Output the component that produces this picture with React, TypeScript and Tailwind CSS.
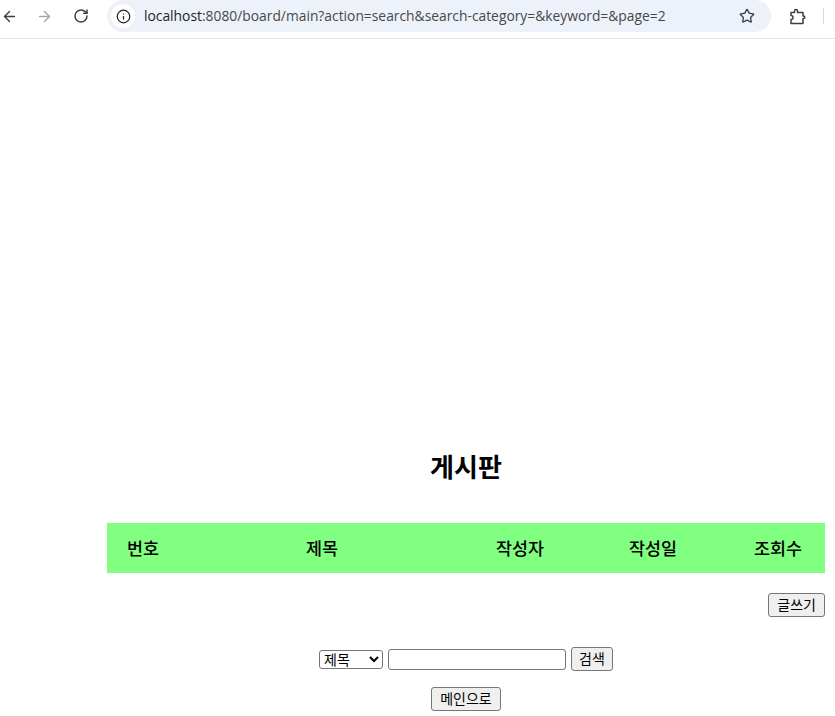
import React from 'react';
import { ArrowLeft, ArrowRight, RotateCw, Info, Star } from 'lucide-react';

const KR = "font-['Liberation_Sans','Noto_Sans_CJK_KR',sans-serif]";
const btn = "h-6 rounded-[3px] border border-[#767676] bg-[#efefef] px-2 text-[14px] font-normal leading-none text-black";

export default function App() {
  const columns = [
    { label: '번호', width: 'w-[72px]' },
    { label: '제목', width: 'w-[286px]' },
    { label: '작성자', width: 'w-[110px]' },
    { label: '작성일', width: 'w-[156px]' },
    { label: '조회수', width: 'w-[94px]' },
  ];

  return (
    <div className={`h-[716px] w-[835px] overflow-hidden bg-white text-black ${KR}`}>
      {/* browser toolbar */}
      <div className="flex h-[39px] items-start border-b border-[#e3e3e3]">
        <div className="flex h-8 w-[107px] items-center text-[#3c3f43]">
          <ArrowLeft size={17} strokeWidth={2} className="ml-[1px]" />
          <ArrowRight size={17} strokeWidth={2} className="ml-[18px] text-[#a5a7a9]" />
          <RotateCw size={16} strokeWidth={2.2} className="ml-[20px]" />
        </div>
        <div className="flex h-8 w-[664px] items-center rounded-full bg-[#edf2fa]">
          <div className="ml-1 flex h-6 w-6 items-center justify-center rounded-full bg-white">
            <Info size={15} strokeWidth={2} className="text-[#202124]" />
          </div>
          <div className="ml-[9px] font-['Open_Sans','Liberation_Sans',sans-serif] text-[13.84px] whitespace-nowrap text-[#474747]">
            <span className="text-[#1f1f1f]">localhost</span>:8080/board/main?action=search&amp;search-category=&amp;keyword=&amp;page=2
          </div>
          <Star size={16} strokeWidth={2} className="ml-auto mr-4 text-[#3c3f43]" />
        </div>
        <div className="flex h-8 items-center">
          <svg width="17" height="17" viewBox="0 0 17 17" fill="none" stroke="#3c3f43" strokeWidth="1.5" strokeLinejoin="round" className="ml-[18px]">
            <path d="M2 4.5H5.5V3a1.5 1.5 0 0 1 3 0V4.5H14V8h.5a1.3 1.3 0 0 1 0 2.6H14V15.5H2V11.5a2 2 0 0 0 0-4Z" />
          </svg>
          <div className="ml-[17px] h-4 w-px bg-[#c9dcf5]" />
        </div>
      </div>

      {/* board */}
      <div className="ml-[107px] w-[718px] pt-[412px]">
        <h2 className="pt-[1px] text-center text-[26px] leading-8 font-bold">게시판</h2>
        <div className="mt-[39px] flex h-[50px] items-center bg-[#80ff80] pt-[2px] text-[17.4px] font-medium">
          {columns.map((col) => (
            <div key={col.label} className={`${col.width} shrink-0 text-center`}>
              {col.label}
            </div>
          ))}
        </div>
        <div className="mt-5 flex justify-end">
          <button className={btn}>글쓰기</button>
        </div>
        <div className="mt-[30px] flex items-center justify-center gap-[5px]">
          <select className="h-[19px] w-16 rounded-[3px] border border-[#767676] bg-white text-[14px] leading-none">
            <option>제목</option>
          </select>
          <input type="text" className="h-[21px] w-[178px] rounded-[3px] border border-[#767676] bg-white" />
          <button className={`${btn} w-[42px] !px-0`}>검색</button>
        </div>
        <div className="mt-[16px] flex justify-center">
          <button className={`${btn} w-[70px] !px-0`}>메인으로</button>
        </div>
      </div>
    </div>
  );
}
